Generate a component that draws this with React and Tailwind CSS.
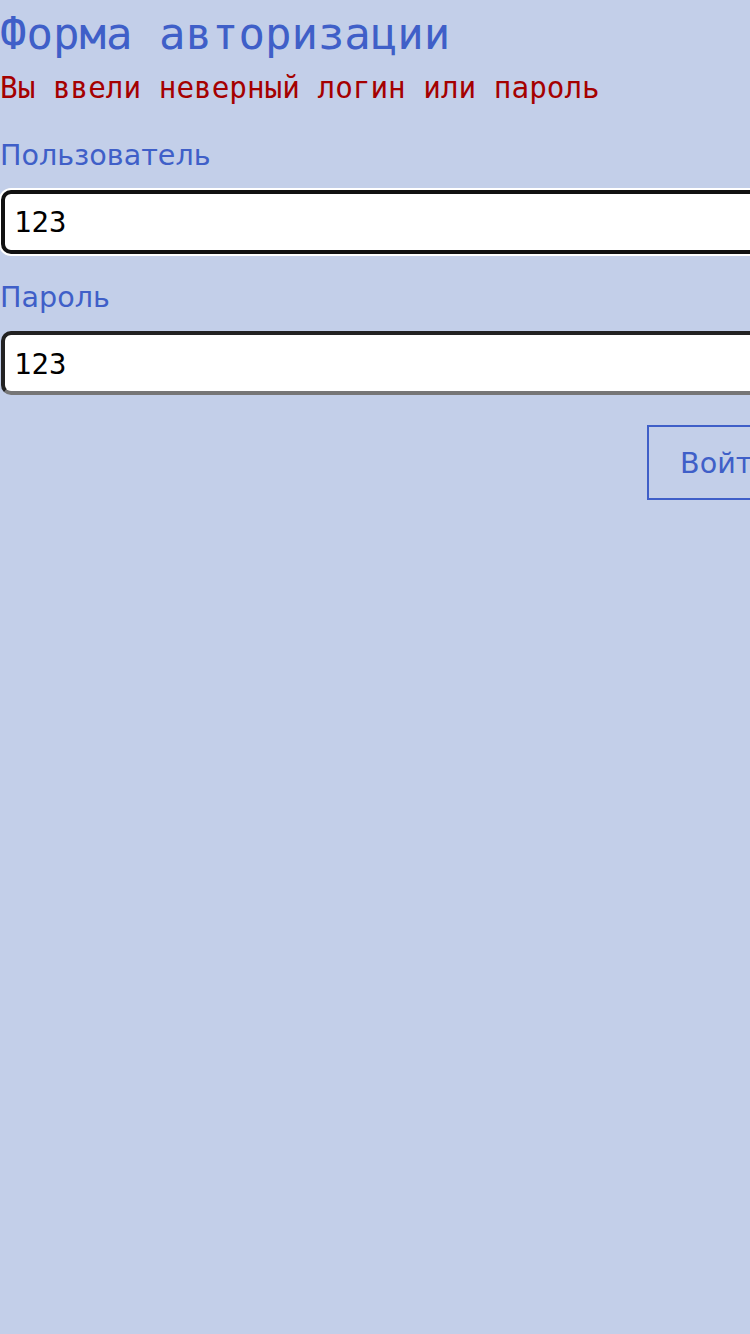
export default function App() {
  const sans = { fontFamily: '"DejaVu Sans", sans-serif' };
  const mono = { fontFamily: '"DejaVu Sans Mono", monospace' };
  return (
    <div className="w-[750px] h-[1334px] overflow-hidden bg-[#c3cfe9]" style={sans}>
      <div className="w-[804px] flex flex-col">
        <h1 className="mt-[12px] text-[44px] leading-none text-[#3f5fc8] whitespace-nowrap" style={mono}>Форма авторизации</h1>
        <p className="mt-[18px] text-[29.3px] leading-none text-[#a50000] whitespace-nowrap" style={mono}>Вы ввели неверный логин или пароль</p>
        <label className="mt-[38px] text-[28.6px] leading-none text-[#3f5fc8]">Пользователь</label>
        <div className="mt-[20px] ml-[1px] h-[64px] rounded-[10px] border-[4px] border-[#111] bg-white shadow-[0_0_0_2px_#ffffff] flex items-center pl-[9px] pt-[2px] text-[29px] text-black" style={mono}>123</div>
        <label className="mt-[29px] text-[28.6px] leading-none text-[#3f5fc8]">Пароль</label>
        <div className="mt-[20px] ml-[1px] h-[64px] rounded-[10px] border-[4px] border-[#222] border-b-[#767676] border-r-[#767676] bg-white flex items-center pl-[9px] pt-[3px] text-[29px] text-black" style={mono}>123</div>
        <div className="mt-[30px] flex justify-end">
          <button className="h-[75px] border-2 border-[#3f5fc8] px-[31px] text-[28.6px] leading-none text-[#3f5fc8]">Войти</button>
        </div>
      </div>
    </div>
  );
}
